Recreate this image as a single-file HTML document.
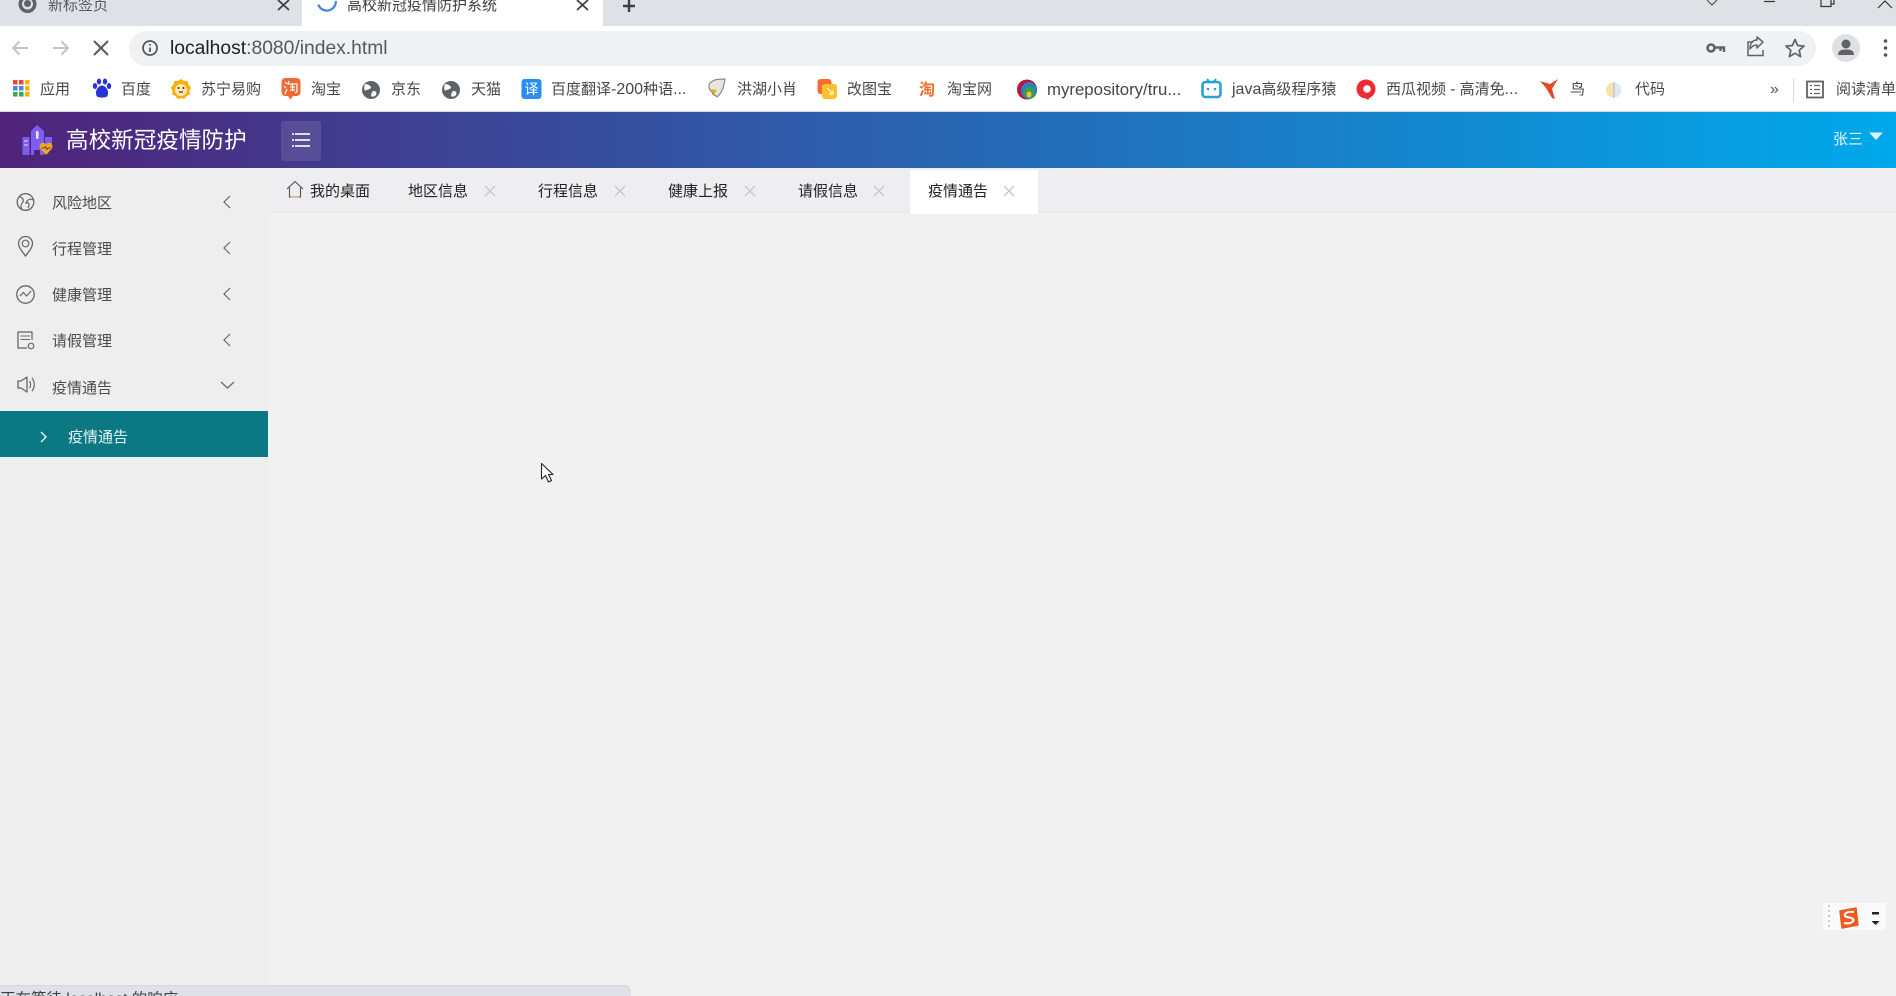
<!DOCTYPE html>
<html lang="zh-CN">
<head>
<meta charset="utf-8">
<title>高校新冠疫情防护系统</title>
<style>
html,body{margin:0;padding:0;width:1896px;height:996px;overflow:hidden;background:#f1f1f1;font-family:"Liberation Sans","Noto Sans CJK SC",sans-serif}
.b{position:absolute}
.t{position:absolute;white-space:nowrap;line-height:20px;height:20px;font-size:15px;color:#4a4c50}
.bm{top:80px;color:#45474b;font-size:15px}
.bm span{font-size:16px}
.side{left:52px;color:#4c4c4c;font-size:15px}
.tab{top:182px;color:#222;font-size:15px}
svg{position:absolute;left:0;top:0;z-index:5}
</style>
</head>
<body>
<!-- browser chrome -->
<div class="b" style="left:0;top:0;width:1896px;height:26px;background:#dee1e6"></div>
<div class="b" style="left:302px;top:0;width:301px;height:27px;background:#fff"></div>
<div class="b" style="left:0;top:26px;width:1896px;height:85px;background:#fff"></div>
<div class="b" style="left:0;top:18px;width:302px;height:8px;background:#dee1e6;border-radius:0 0 10px 0"></div>
<div class="b" style="left:129px;top:31px;width:1687px;height:35px;background:#f0f1f3;border-radius:18px"></div>
<div class="b" style="left:0;top:111px;width:1896px;height:1px;background:#d6d9de"></div>

<div class="t" style="left:48px;top:-4px;color:#55585c;font-size:15px">新标签页</div>
<div class="t" style="left:347px;top:-4px;color:#3c4043;font-size:15px">高校新冠疫情防护系统</div>
<div class="t" style="left:170px;top:38px;font-size:19.3px;line-height:22px;height:22px;color:#55585c"><span style="color:#202124">localhost</span>:8080/index.html</div>

<div class="t bm" style="left:40px">应用</div>
<div class="t bm" style="left:121px">百度</div>
<div class="t bm" style="left:201px">苏宁易购</div>
<div class="t bm" style="left:311px">淘宝</div>
<div class="t bm" style="left:391px">京东</div>
<div class="t bm" style="left:471px">天猫</div>
<div class="t bm" style="left:551px">百度翻译<span>-200</span>种语<span>...</span></div>
<div class="t bm" style="left:737px">洪湖小肖</div>
<div class="t bm" style="left:847px">改图宝</div>
<div class="t bm" style="left:947px">淘宝网</div>
<div class="t bm" style="left:1047px"><span style="font-size:16.8px">myrepository/tru...</span></div>
<div class="t bm" style="left:1232px"><span>java</span>高级程序猿</div>
<div class="t bm" style="left:1386px">西瓜视频 <span>-</span> 高清免<span>...</span></div>
<div class="t bm" style="left:1570px">鸟</div>
<div class="t bm" style="left:1635px">代码</div>
<div class="t bm" style="left:1770px;font-size:16px;color:#555">»</div>
<div class="b" style="left:1793px;top:79px;width:1px;height:24px;background:#d5d7da"></div>
<div class="t bm" style="left:1836px">阅读清单</div>

<!-- header -->
<div class="b" style="left:0;top:112px;width:1896px;height:56px;background:linear-gradient(90deg,#50237a 0%,#00a9eb 100%)"></div>
<div class="t" style="left:66px;top:127px;font-size:22.6px;line-height:28px;height:28px;color:#fff">高校新冠疫情防护</div>
<div class="b" style="left:281px;top:121px;width:40px;height:40px;background:rgba(255,255,255,.11);border-radius:3px"></div>
<div class="t" style="left:1833px;top:130px;color:#e8f6fd;font-size:15px">张三</div>

<!-- sidebar -->
<div class="b" style="left:0;top:168px;width:268px;height:828px;background:#eeeeee"></div>
<div class="t side" style="top:194px">风险地区</div>
<div class="t side" style="top:240px">行程管理</div>
<div class="t side" style="top:286px">健康管理</div>
<div class="t side" style="top:332px">请假管理</div>
<div class="t side" style="top:379px">疫情通告</div>
<div class="b" style="left:0;top:411px;width:268px;height:46px;background:#0b7884"></div>
<div class="t" style="left:68px;top:428px;color:#e4f5f5;font-size:15px">疫情通告</div>

<!-- content tabs -->
<div class="b" style="left:268px;top:168px;width:1628px;height:44px;background:#eeeef0"></div>
<div class="b" style="left:268px;top:212px;width:1628px;height:1px;background:#e7e7e8"></div>
<div class="b" style="left:910px;top:170px;width:128px;height:44px;background:#fff"></div>
<div class="t tab" style="left:310px">我的桌面</div>
<div class="t tab" style="left:408px">地区信息</div>
<div class="t tab" style="left:538px">行程信息</div>
<div class="t tab" style="left:668px">健康上报</div>
<div class="t tab" style="left:798px">请假信息</div>
<div class="t tab" style="left:928px">疫情通告</div>

<!-- IME -->
<div class="b" style="left:1823px;top:903px;width:63px;height:27px;background:#fafafa"></div>

<!-- status bubble -->
<div class="b" style="left:0;top:985px;width:631px;height:11px;background:#dfe1e6;border-top:1px solid #d4d6da;border-radius:0 6px 0 0;box-sizing:border-box;overflow:hidden;z-index:6">
<div class="t" style="left:0;top:4px;color:#3c3f43;font-size:15.5px">正在等待 localhost 的响应...</div>
</div>

<svg width="1896" height="996" viewBox="0 0 1896 996" fill="none">
<!-- tab strip icons -->
<circle cx="27.500" cy="4" r="9" fill="#5f6368"/><circle cx="27.500" cy="4" r="5.500" fill="#dee1e6"/><circle cx="27.500" cy="3.500" r="3.500" fill="#5f6368"/>
<path d="M278 0L289 10M289 0L278 10" stroke="#3c4043" stroke-width="1.800"/>
<path d="M318.300 4.500A9 9 0 0 0 335.800 1" stroke="#4a86e0" stroke-width="2.300"/>
<path d="M577 0L588 10M588 0L577 10" stroke="#3c4043" stroke-width="1.800"/>
<path d="M629 0V12M623 6H635" stroke="#3c4043" stroke-width="2.400"/>
<!-- window controls -->
<path d="M1707 0L1712 5L1717 0" stroke="#444" stroke-width="1"/>
<path d="M1764 1.500H1775" stroke="#333" stroke-width="1.200"/>
<path d="M1821 0V6.500H1831V0M1831 4H1834V0" stroke="#333" stroke-width="1.200"/>
<path d="M1878 8L1885 1L1892 8" stroke="#333" stroke-width="1.200"/>
<!-- toolbar -->
<path d="M28 48H13M19.500 41.500L13 48L19.500 54.500" stroke="#c2c4c8" stroke-width="2"/>
<path d="M53 48H68M61.500 41.500L68 48L61.500 54.500" stroke="#c2c4c8" stroke-width="2"/>
<path d="M94 41L108 55M108 41L94 55" stroke="#55585c" stroke-width="2"/>
<circle cx="150" cy="48" r="7" stroke="#55585c" stroke-width="1.800"/><path d="M150 47.500V52M150 44V45.500" stroke="#55585c" stroke-width="1.800"/>
<circle cx="1711" cy="48" r="3.500" stroke="#5f6368" stroke-width="2.600"/><path d="M1715 47.500H1724V52M1720.500 48V51" stroke="#5f6368" stroke-width="2.400"/>
<path d="M1763 50V55.500H1748V42H1753" stroke="#5f6368" stroke-width="1.500"/><path d="M1763 42L1757 37V40C1752 40 1750 44 1750 49C1752 46 1754 45 1757 45V48Z" stroke="#5f6368" stroke-width="1.500" stroke-linejoin="round"/>
<path d="M1795 39.500L1797.600 45.500L1804 46.100L1799.200 50.400L1800.600 56.600L1795 53.300L1789.400 56.600L1790.800 50.400L1786 46.100L1792.400 45.500Z" stroke="#5f6368" stroke-width="1.700" stroke-linejoin="round"/>
<circle cx="1846" cy="48" r="14" fill="#dfe1e5"/><circle cx="1846" cy="44" r="4.500" fill="#5f6368"/><path d="M1838 55C1838 50 1842 49.500 1846 49.500C1850 49.500 1854 50 1854 55Z" fill="#5f6368"/>
<circle cx="1885.500" cy="41" r="1.800" fill="#55585c"/><circle cx="1885.500" cy="48" r="1.800" fill="#55585c"/><circle cx="1885.500" cy="55" r="1.800" fill="#55585c"/>
<!-- bookmarks -->
<g>
<rect x="13" y="80" width="4.500" height="4.500" fill="#e8453c"/><rect x="19" y="80" width="4.500" height="4.500" fill="#e8453c"/><rect x="25" y="80" width="4.500" height="4.500" fill="#f4b400"/>
<rect x="13" y="86" width="4.500" height="4.500" fill="#4285f4"/><rect x="19" y="86" width="4.500" height="4.500" fill="#4285f4"/><rect x="25" y="86" width="4.500" height="4.500" fill="#f4b400"/>
<rect x="13" y="92" width="4.500" height="4.500" fill="#34a853"/><rect x="19" y="92" width="4.500" height="4.500" fill="#34a853"/><rect x="25" y="92" width="4.500" height="4.500" fill="#f4b400"/>
</g>
<g fill="#2932d8"><ellipse cx="95" cy="86" rx="2.200" ry="3"/><ellipse cx="109" cy="86" rx="2.200" ry="3"/><ellipse cx="99" cy="81.500" rx="2.200" ry="3"/><ellipse cx="105" cy="81.500" rx="2.200" ry="3"/><path d="M102 85.500C106 85.500 110 92 107 96.500C104 98 100 98 97 96.500C94 92 98 85.500 102 85.500Z"/></g>
<path d="M181 79L184 81L187.500 81L188.500 84.500L191 87.500L189.500 91L190 94.500L186.500 96L184 99L181 98L178 99L175.500 96L172 94.500L172.500 91L171 87.500L173.500 84.500L174.500 81L178 81Z" fill="#f9ae0c"/><circle cx="181" cy="90" r="6" fill="#fde9b0"/><circle cx="178.500" cy="88" r="1" fill="#333"/><circle cx="183.500" cy="88" r="1" fill="#333"/><path d="M179 92H183" stroke="#a33" stroke-width="1.500"/>
<rect x="281.500" y="78" width="19" height="18" rx="4" fill="#ee6a33"/><path d="M288 96L290.500 99.500L293 96Z" fill="#ee6a33"/>
<path d="M285 82L287 84M284 86L286 88M285 94L287 89M289 81L288 84H297V92L295 93M290 87H295M290 90H295M292.500 84V91" stroke="#fff" stroke-width="1.200"/>
<circle cx="371" cy="90" r="9" fill="#5f6368"/><path d="M365 84C368 84 371 86 371 88C369 90 367 89 365 91C364 89 364 86 365 84ZM373 91C376 91 377 92 376 95C374 97 372 97 371 96C371 94 372 92 373 91Z" fill="#fff"/>
<circle cx="451" cy="90" r="9" fill="#5f6368"/><path d="M445 84C448 84 451 86 451 88C449 90 447 89 445 91C444 89 444 86 445 84ZM453 91C456 91 457 92 456 95C454 97 452 97 451 96C451 94 452 92 453 91Z" fill="#fff"/>
<rect x="521.500" y="79" width="20" height="20" rx="3" fill="#2a8df0"/>
<text x="531.500" y="94" font-size="14" fill="#fff" text-anchor="middle" font-family="Noto Sans CJK SC, sans-serif">译</text>
<path d="M710 83C714 79 720 79 725 79C724 85 723 92 717 97C715 94 713 96 712 92C709 90 708 86 710 83Z" fill="#e6e6df" stroke="#777" stroke-width="1"/><path d="M711 89L717 90L714 95Z" fill="#e9a91f"/>
<rect x="817.500" y="79" width="14" height="15" rx="3" fill="#f76b31"/><rect x="822" y="84" width="15" height="15" rx="3" fill="#fbc02a"/><path d="M827 88L833 94M833 90V94H829" stroke="#fff" stroke-width="1"/>
<text x="927" y="95" font-size="16" fill="#f36e2f" font-weight="700" text-anchor="middle" font-family="Noto Sans CJK SC, sans-serif">淘</text>
<circle cx="1027" cy="89.500" r="10" fill="#be1437"/><ellipse cx="1029" cy="90.500" rx="8" ry="8.500" fill="#2a80ba"/><ellipse cx="1029.500" cy="92.500" rx="5.500" ry="6" fill="#3c9a55"/><ellipse cx="1029" cy="94.500" rx="2.500" ry="3" fill="#e5c72b"/>
<path d="M1207 79L1210 83M1216 79L1213 83" stroke="#22a3d8" stroke-width="2"/><rect x="1202.500" y="82" width="18" height="15" rx="3" stroke="#22a3d8" stroke-width="2.600"/><circle cx="1208" cy="89" r="1.300" fill="#22a3d8"/><circle cx="1215" cy="89" r="1.300" fill="#22a3d8"/>
<circle cx="1366" cy="89" r="9.500" fill="#ee2a35"/><path d="M1361 95L1368 100L1371 96Z" fill="#ee2a35"/><circle cx="1367" cy="89" r="3.800" fill="#fff"/><path d="M1357 90L1363 85" stroke="#fff" stroke-width="0"/>
<path d="M1558 79L1550 84L1540 81L1546 88L1552 98L1555 99L1552 89Z" fill="#e2492a"/>
<circle cx="1614" cy="90" r="7.500" fill="#dfe8f2"/><path d="M1613.500 82.500A7.500 7.500 0 0 0 1613.500 97.500Z" fill="#f4e4a8"/><path d="M1614 82V98" stroke="#9fb0bf" stroke-width=".8"/>
<rect x="1807" y="81.500" width="16" height="16" stroke="#5f6368" stroke-width="1.800"/><path d="M1810 85.500H1812M1814 85.500H1820M1810 89.500H1812M1814 89.500H1820M1810 93.500H1812M1814 93.500H1820" stroke="#5f6368" stroke-width="1.200"/>
<!-- logo -->
<path d="M37 125L44 131V155H31V131Z" fill="#7d5cf0"/><rect x="36" y="131" width="2.500" height="8" rx="1" fill="#e9e4ff"/>
<rect x="22.500" y="137" width="7" height="18" fill="#7d5cf0"/><path d="M24 141H28M24 145H28" stroke="#e0d9ff"/>
<path d="M45 137H52V144H45Z" fill="#7d5cf0"/><path d="M34 155H40V150H34Z" fill="#50237a"/>
<path d="M46 155L40 148.500C38.500 145 41 142 44 143C45 143.300 45.500 144 46 144.500C46.500 144 47 143.300 48 143C51 142 53.500 145 52 148.500Z" fill="#f1a91c"/>
<path d="M41.500 148H44.500L45.500 146.500L47 149.500L48 148H51" stroke="#50237a" stroke-width=".8"/>
<!-- menu -->
<path d="M295 134H310M295 140H310M295 146H310" stroke="#f3f1f8" stroke-width="1.700"/>
<rect x="292" y="133.200" width="2" height="1.700" fill="#f3f1f8"/><rect x="292" y="139.200" width="2" height="1.700" fill="#f3f1f8"/><rect x="292" y="145.200" width="2" height="1.700" fill="#f3f1f8"/>
<!-- user caret -->
<path d="M1869 132.500H1883L1876 140Z" fill="#d9f2fc"/>
<!-- sidebar icons -->
<circle cx="25.500" cy="202" r="8.300" stroke="#666" stroke-width="1.300"/>
<path d="M20 197C23 198 24 200 23 202C21 204 20 206 22 209M33 200C30 198 27 200 26 203C29 202 30 204 28 208" stroke="#666" stroke-width="1.200"/>
<path d="M25.500 256C21 250 18.500 247 18.500 243.500A7 7 0 0 1 32.500 243.500C32.500 247 30 250 25.500 256Z" stroke="#666" stroke-width="1.300"/><circle cx="25.500" cy="243.500" r="3.300" stroke="#666" stroke-width="1.200"/>
<circle cx="25.500" cy="294.500" r="8.700" stroke="#666" stroke-width="1.300"/><path d="M20 296L23.500 292.500L26.500 296L31 291" stroke="#666" stroke-width="1.200"/>
<path d="M32 340V332H18V348H27" stroke="#666" stroke-width="1.300" stroke-linejoin="round"/><path d="M20.500 336H30M20.500 339.500H30" stroke="#666"/><circle cx="31" cy="346" r="2.800" stroke="#666" stroke-width="1.200"/>
<path d="M18 381H21L27 377V392L21 388H18Z" stroke="#666" stroke-width="1.300" stroke-linejoin="round"/><path d="M29.500 381C31 383 31 386 29.500 388M32 378C35 382 35 387 32 391" stroke="#666" stroke-width="1.200"/>
<path d="M230 196L224 202L230 208M230 242L224 248L230 254M230 288L224 294L230 300M230 334L224 340L230 346" stroke="#666" stroke-width="1.200"/>
<path d="M221 382L227.500 388L234 382" stroke="#666" stroke-width="1.200"/>
<path d="M41 432L46 437L41 442" stroke="#e8f8f8" stroke-width="1.400"/>
<!-- home icon -->
<path d="M287 189L295 181.500L303 189" stroke="#555" stroke-width="1.100"/><path d="M289.500 187.500V197H300.500V187.500" stroke="#555" stroke-width="1.100"/><path d="M291 197H299" stroke="#c98a3a" stroke-width="1"/>
<!-- tab close -->
<g stroke="#c9c9cb" stroke-width="1.300"><path d="M485 186L495 196M495 186L485 196"/><path d="M615 186L625 196M625 186L615 196"/><path d="M745 186L755 196M755 186L745 196"/><path d="M874 186L884 196M884 186L874 196"/><path d="M1004 186L1014 196M1014 186L1004 196"/></g>
<!-- cursor -->
<path d="M541.500 463.500V479L545.500 475.500L548.500 482L551.500 480.500L548.500 474.500H553Z" fill="#fff" stroke="#222" stroke-width="1.100" stroke-linejoin="round"/>
<!-- sogou -->
<g fill="#c9c9c9"><rect x="1828" y="905" width="2" height="2"/><rect x="1828" y="910" width="2" height="2"/><rect x="1828" y="915" width="2" height="2"/><rect x="1828" y="920" width="2" height="2"/><rect x="1828" y="925" width="2" height="2"/></g>
<path d="M1840 911L1856 908L1858 925L1842 928Z" fill="#ee5a22" stroke="#ee5a22" stroke-width="1.500" stroke-linejoin="round"/>
<path d="M1854 912C1849 911 1843.500 913 1845 916C1847 918 1853 917 1853.500 920C1853 923 1848 924 1844 923" stroke="#fff" stroke-width="2"/>
<rect x="1872" y="912" width="7" height="2.500" fill="#222"/><path d="M1871.500 921H1879.500L1875.500 925Z" fill="#222"/>
</svg>
</body>
</html>
